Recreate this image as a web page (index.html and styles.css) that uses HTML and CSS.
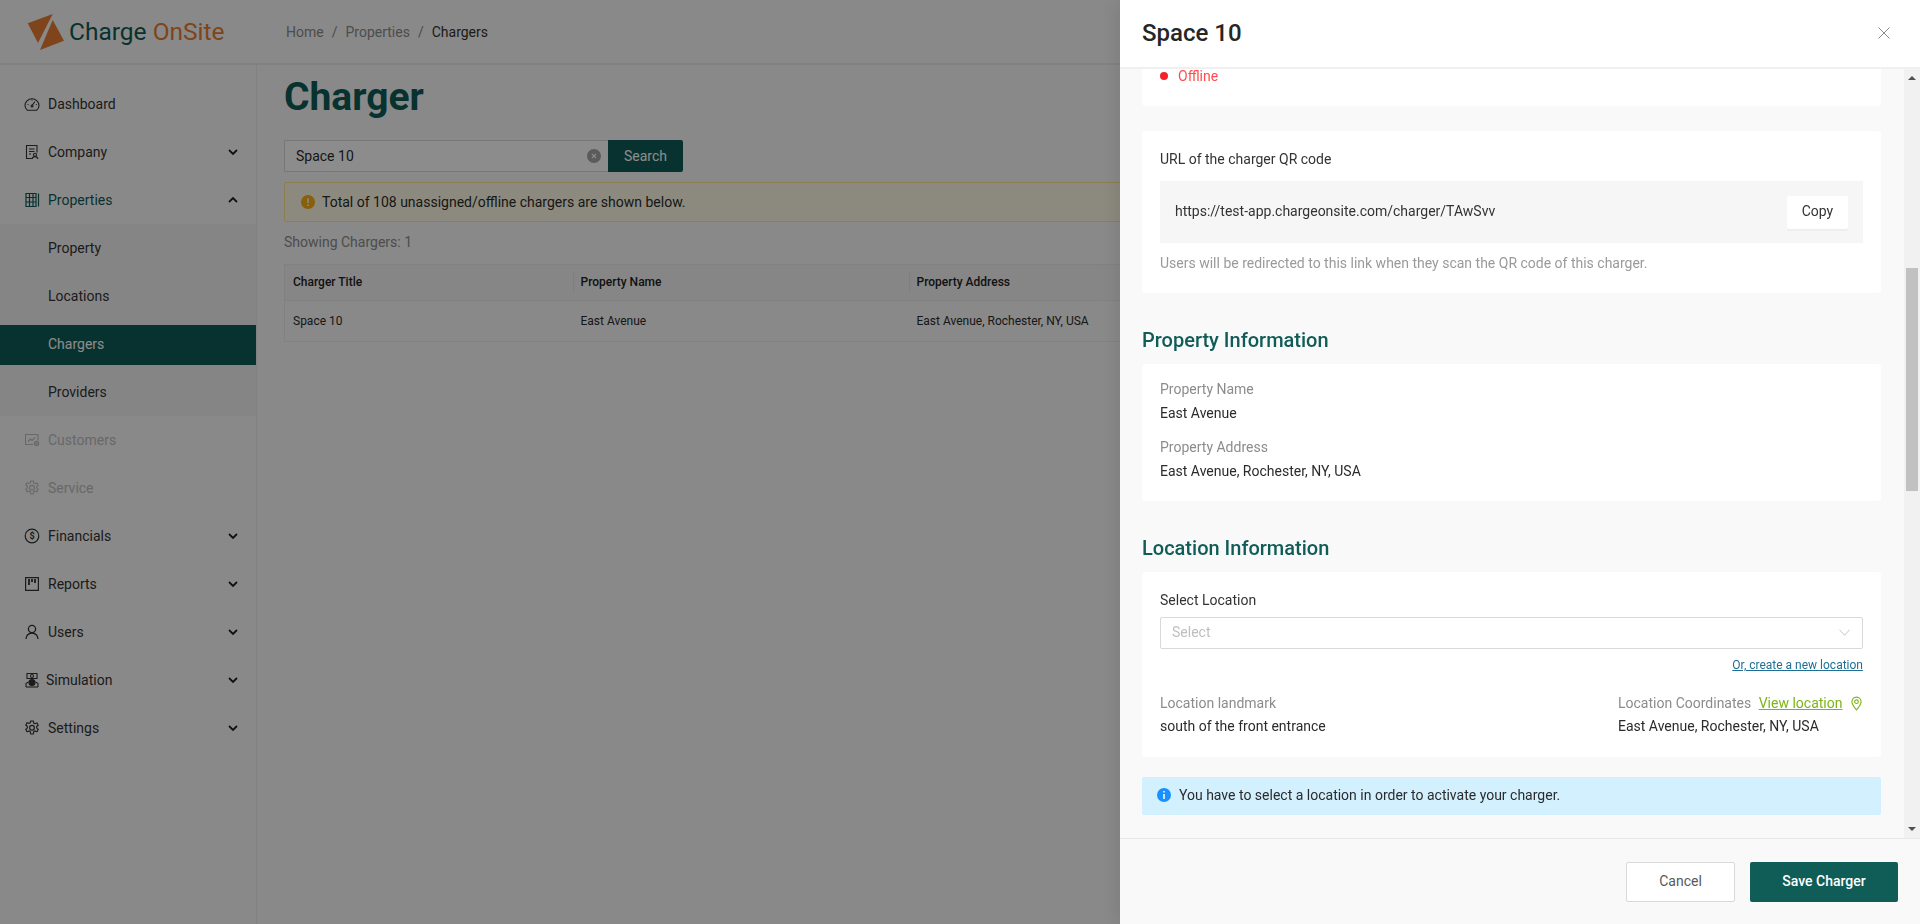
FILE: index.html
```html
<!DOCTYPE html>
<html lang="en">
<head>
    <meta charset="UTF-8">
    <title>Charge OnSite</title>
    <link rel="stylesheet" href="styles.css">
</head>
<body>

<div class="app">
    <!-- Top bar -->
    <header class="topbar">
        <div class="logo">
            <svg width="38" height="38" viewBox="0 0 38 38">
                <path fill="#e87d33" d="M0.700 10.300 L25.700 1 L11 30 Z"/>
                <path fill="#e87d33" d="M25.700 7 L37 27.700 L13 37 Z"/>
            </svg>
            <span class="logo-text">Charge <span class="logo-accent">OnSite</span></span>
        </div>
        <nav class="breadcrumb">
            <span>Home</span><span class="sep">/</span><span>Properties</span><span class="sep">/</span><span class="current">Chargers</span>
        </nav>
    </header>

    <div class="layout">
        <!-- Sidebar -->
        <aside class="sidebar">
            <div class="nav-item">
                <svg class="nav-icon" viewBox="0 0 16 16" fill="none" stroke="currentColor" stroke-width="1.100"><path d="M3.200 14.200 A7 6.600 0 1 1 12.800 14.200 Z"/><path d="M8 9.500 L11 5.500"/><path d="M3.500 8.500h1M11.800 8.500h1M8 3.500v1"/><circle cx="8" cy="10" r="1"/></svg>
                <span>Dashboard</span>
            </div>
            <div class="nav-item">
                <svg class="nav-icon" viewBox="0 0 16 16" fill="none" stroke="currentColor" stroke-width="1.100"><path d="M8 14.500H2.500V1.500h10.500v7"/><path d="M5 5h5.500M5 7.500h5.500M5 10h2"/><circle cx="11" cy="10.800" r="1.600"/><path d="M8.200 15c.2-1.500 1.300-2.400 2.800-2.400s2.600.9 2.800 2.400"/></svg>
                <span>Company</span>
                <svg class="chevron" viewBox="0 0 10 6"><path d="M1 1l4 4 4-4"/></svg>
            </div>
            <div class="nav-item nav-open">
                <svg class="nav-icon" viewBox="0 0 16 16" fill="none" stroke="currentColor" stroke-width="1.200"><path d="M2 1.500h10v13H2zM2 5.500h10M2 10h10M5.500 1.500v13M9 1.500v13M14.500 1.500v13"/></svg>
                <span>Properties</span>
                <svg class="chevron" viewBox="0 0 10 6"><path d="M1 5l4-4 4 4"/></svg>
            </div>
            <div class="submenu">
                <div class="sub-item">Property</div>
                <div class="sub-item">Locations</div>
                <div class="sub-item sub-active">Chargers</div>
                <div class="sub-item">Providers</div>
            </div>
            <div class="nav-item nav-disabled">
                <svg class="nav-icon" viewBox="0 0 16 16" fill="none" stroke="currentColor" stroke-width="1.100"><path d="M9 12.500H1.500v-10h12.500v6"/><path d="M4 9.500l2.500-2.500 1.500 1.500 3-3"/><circle cx="12.500" cy="11.500" r="2.200"/><circle cx="12.500" cy="11.500" r=".7"/></svg>
                <span>Customers</span>
            </div>
            <div class="nav-item nav-disabled">
                <svg class="nav-icon" viewBox="0 0 16 16" fill="none" stroke="currentColor" stroke-width="1.100"><path d="M6.700 1h2.600l.4 2 1.300.7 1.900-.7 1.300 2.300-1.500 1.300v1.500l1.500 1.300-1.300 2.300-1.900-.7-1.300.7-.4 2.300H6.700l-.4-2.300-1.300-.7-1.900.7-1.300-2.300 1.500-1.300V6.300L1.800 5l1.300-2.300 1.900.7 1.300-.7z"/><circle cx="8" cy="7.800" r="2.400"/></svg>
                <span>Service</span>
            </div>
            <div class="nav-item">
                <svg class="nav-icon" viewBox="0 0 16 16" fill="none" stroke="currentColor" stroke-width="1.200"><circle cx="8" cy="8" r="6.800"/><text x="8" y="11" text-anchor="middle" class="dollar">$</text></svg>
                <span>Financials</span>
                <svg class="chevron" viewBox="0 0 10 6"><path d="M1 1l4 4 4-4"/></svg>
            </div>
            <div class="nav-item">
                <svg class="nav-icon" viewBox="0 0 16 16" fill="none" stroke="currentColor" stroke-width="1.200"><path d="M1.600 1.600h12.800v12.800H1.600z"/><path stroke-width="1.800" d="M5 3v6M8 3v3M11 3v4"/></svg>
                <span>Reports</span>
                <svg class="chevron" viewBox="0 0 10 6"><path d="M1 1l4 4 4-4"/></svg>
            </div>
            <div class="nav-item">
                <svg class="nav-icon" viewBox="0 0 16 16" fill="none" stroke="currentColor" stroke-width="1.300"><circle cx="8" cy="5" r="3.600"/><path d="M2 15c0-3.500 2.600-6 6-6s6 2.500 6 6"/></svg>
                <span>Users</span>
                <svg class="chevron" viewBox="0 0 10 6"><path d="M1 1l4 4 4-4"/></svg>
            </div>
            <div class="nav-item nav-tight">
                <svg class="nav-icon" viewBox="0 0 16 16" fill="none" stroke="currentColor" stroke-width="1.100"><path d="M3 1.500h10v5H3zM2 15v-3.500l2.500-1.500M14 15v-3.500L11.500 10"/><circle cx="8" cy="4" r="1.500"/><circle cx="8" cy="10.500" r="3" fill="currentColor"/><path d="M2 15h12"/></svg>
                <span>Simulation</span>
                <svg class="chevron" viewBox="0 0 10 6"><path d="M1 1l4 4 4-4"/></svg>
            </div>
            <div class="nav-item">
                <svg class="nav-icon" viewBox="0 0 16 16" fill="none" stroke="currentColor" stroke-width="1.200"><path d="M6.700 1h2.600l.4 2 1.300.7 1.900-.7 1.300 2.300-1.500 1.300v1.500l1.500 1.300-1.300 2.300-1.900-.7-1.300.7-.4 2.300H6.700l-.4-2.300-1.300-.7-1.900.7-1.300-2.300 1.500-1.300V6.300L1.800 5l1.300-2.300 1.900.7 1.300-.7z"/><circle cx="8" cy="7.800" r="2.400"/></svg>
                <span>Settings</span>
                <svg class="chevron" viewBox="0 0 10 6"><path d="M1 1l4 4 4-4"/></svg>
            </div>
        </aside>

        <!-- Page content -->
        <main class="main">
            <h1 class="page-title">Charger</h1>
            <div class="search">
                <div class="search-input">
                    <span>Space 10</span>
                    <svg class="clear-icon" viewBox="0 0 12 12"><circle cx="6" cy="6" r="6" fill="#a6a6a6"/><path d="M4.200 4.200l3.600 3.600M7.800 4.200l-3.600 3.600" stroke="#fff" stroke-width="1"/></svg>
                </div>
                <button class="search-btn">Search</button>
            </div>
            <div class="warning">
                <svg class="alert-icon" viewBox="0 0 14 14"><circle cx="7" cy="7" r="7" fill="#faad14"/><path d="M7 3.200v4.800M7 9.500v1.400" stroke="#fff" stroke-width="1.500"/></svg>
                <span>Total of 108 unassigned/offline chargers are shown below.</span>
            </div>
            <div class="showing">Showing Chargers: 1</div>
            <table class="table">
                <thead>
                    <tr><th class="col-title"><span>Charger Title</span></th><th class="col-name"><span>Property Name</span></th><th><span>Property Address</span></th></tr>
                </thead>
                <tbody>
                    <tr><td>Space 10</td><td>East Avenue</td><td>East Avenue, Rochester, NY, USA</td></tr>
                </tbody>
            </table>
        </main>
    </div>
</div>

<div class="mask"></div>

<!-- Drawer -->
<section class="drawer">
    <div class="drawer-header">
        <h2 class="drawer-title">Space 10</h2>
        <svg class="close-icon" viewBox="0 0 12 12"><path d="M.5.500l11 11M11.500.500l-11 11"/></svg>
    </div>
    <div class="drawer-scroll">
        <div class="drawer-content">
            <div class="card card-status">
                <span class="status-dot"></span><span class="status-text">Offline</span>
            </div>

            <div class="card card-url">
                <div class="field-label">URL of the charger QR code</div>
                <div class="url-box">
                    <span class="url-text">https://test-app.chargeonsite.com/charger/TAwSvv</span>
                    <button class="copy-btn">Copy</button>
                </div>
                <div class="hint">Users will be redirected to this link when they scan the QR code of this charger.</div>
            </div>

            <h3 class="section-title">Property Information</h3>
            <div class="card card-property">
                <div class="label">Property Name</div>
                <div class="value">East Avenue</div>
                <div class="label label-next">Property Address</div>
                <div class="value">East Avenue, Rochester, NY, USA</div>
            </div>

            <h3 class="section-title">Location Information</h3>
            <div class="card card-location">
                <div class="field-label">Select Location</div>
                <div class="select">
                    <span>Select</span>
                    <svg class="select-arrow" viewBox="0 0 12 7"><path d="M.5.500L6 6.500 11.500.500"/></svg>
                </div>
                <div class="new-location"><a href="#">Or, create a new location</a></div>
                <div class="location-info">
                    <div>
                        <div class="label">Location landmark</div>
                        <div class="value">south of the front entrance</div>
                    </div>
                    <div class="coords">
                        <div class="label">Location Coordinates <a class="view-link" href="#">View location</a>
                            <svg class="pin-icon" viewBox="0 0 12 16" fill="none" stroke="#7cb518" stroke-width="1.200"><path d="M6 15C3 11.500 1 8.800 1 6a5 5 0 0 1 10 0c0 2.800-2 5.500-5 9z"/><circle cx="6" cy="6" r="2"/></svg>
                        </div>
                        <div class="value">East Avenue, Rochester, NY, USA</div>
                    </div>
                </div>
            </div>

            <div class="info">
                <svg class="alert-icon" viewBox="0 0 14 14"><circle cx="7" cy="7" r="7" fill="#1890ff"/><path d="M7 6v5M7 3v1.500" stroke="#fff" stroke-width="1.500"/></svg>
                <span>You have to select a location in order to activate your charger.</span>
            </div>
        </div>
        <div class="scrollbar">
            <span class="arrow-up"></span>
            <span class="thumb"></span>
            <span class="arrow-down"></span>
        </div>
    </div>
    <div class="drawer-footer">
        <button class="btn-cancel">Cancel</button>
        <button class="btn-save">Save Charger</button>
    </div>
</section>

</body>
</html>
```

FILE: styles.css
```css
* {
    box-sizing: border-box;
}
html, body {
    height: 100%;
}
body {
    margin: 0;
    overflow: hidden;
    font-family: Roboto, "Liberation Sans", sans-serif;
    font-size: 14px;
    line-height: 20px;
    color: #2b2b2b;
    background-color: #fafafa;
}
button {
    font-family: inherit;
    font-size: 14px;
    cursor: pointer;
}

/* Top bar */
.topbar {
    display: flex;
    align-items: center;
    height: 65px;
    border-bottom: 2px solid #ececec;
}
.logo {
    display: flex;
    align-items: center;
    width: 286px;
    padding-left: 27px;
    padding-top: 1px;
}
.logo-text {
    margin-left: 4px;
    font-size: 24.500px;
    line-height: 30px;
    color: #105c57;
}
.logo-accent {
    color: #e87d33;
}
.breadcrumb {
    display: flex;
    color: #8c8c8c;
}
.breadcrumb .sep {
    margin: 0 8px;
}
.breadcrumb .current {
    color: #333;
}

/* Sidebar */
.layout {
    display: flex;
    height: 859px;
}
.sidebar {
    width: 257px;
    flex: none;
    padding-top: 15px;
    border-right: 1px solid #ececec;
}
.nav-item {
    display: flex;
    align-items: center;
    height: 48px;
    padding: 0 24px;
    color: #333;
}
.nav-icon {
    width: 16px;
    height: 16px;
    margin-right: 8px;
    flex: none;
}
.nav-tight .nav-icon {
    margin-right: 6px;
}
.chevron {
    width: 10px;
    height: 6px;
    margin-left: auto;
    margin-right: -6px;
    fill: none;
    stroke: #222;
    stroke-width: 1.800;
}
.nav-open {
    color: #105c57;
}
.nav-disabled {
    color: #bdbdbd;
}
.dollar {
    font-family: Roboto, sans-serif;
    font-size: 9px;
    font-weight: 700;
    fill: currentColor;
    stroke: none;
}
.submenu {
    display: flex;
    flex-direction: column;
    gap: 8px;
    padding: 5px 0 3px;
    background-color: #f3f3f3;
}
.sub-item {
    display: flex;
    align-items: center;
    height: 40px;
    padding: 0 0 2px 48px;
    color: #333;
}
.sub-active {
    background-color: #105c57;
    color: #fff;
}

/* Main */
.main {
    flex: 1;
    padding: 8px 28px 0 27px;
}
.page-title {
    margin: 0 0 19px;
    font-size: 39px;
    line-height: 48px;
    font-weight: 700;
    color: #105c57;
}
.search {
    display: flex;
    height: 32px;
}
.search-input {
    display: flex;
    align-items: center;
    justify-content: space-between;
    width: 324px;
    padding: 0 7px 0 11px;
    background-color: #fff;
    border: 1px solid #d9d9d9;
    border-right: none;
    border-radius: 2px 0 0 2px;
}
.clear-icon {
    width: 14px;
    height: 14px;
}
.search-btn {
    width: 75px;
    border: none;
    border-radius: 0 2px 2px 0;
    background-color: #105c57;
    color: #fff;
}
.warning {
    display: flex;
    align-items: center;
    height: 40px;
    margin-top: 10px;
    padding-left: 16px;
    background-color: #fffbe6;
    border: 1px solid #ffe58f;
    border-radius: 2px;
}
.warning .alert-icon {
    margin-right: 7px;
}
.alert-icon {
    width: 14px;
    height: 14px;
    margin-right: 8px;
    flex: none;
}
.showing {
    margin-top: 10px;
    color: #8c8c8c;
}
.table {
    width: 100%;
    margin-top: 12px;
    border-collapse: collapse;
    table-layout: fixed;
    font-size: 12px;
}
.table th {
    height: 36px;
    padding: 0 0 2px;
    text-align: left;
    font-weight: 500;
    color: #222;
    background-color: #f5f5f5;
    border-top: 1px solid #ececec;
    border-bottom: 1px solid #ececec;
}
.table th span {
    display: block;
    padding-left: 7px;
    border-left: 1px solid #e6e6e6;
}
.table th:first-child span {
    padding-left: 8px;
    border-left: none;
}
.table td {
    height: 41px;
    padding: 0 8px;
    background-color: #fafafa;
    border-bottom: 1px solid #ececec;
}
.table th:first-child, .table td:first-child {
    border-left: 1px solid #ececec;
}
.col-title {
    width: 288px;
}
.col-name {
    width: 336px;
}

/* Mask and drawer */
.mask {
    position: fixed;
    inset: 0;
    background-color: rgba(0, 0, 0, .45);
}
.drawer {
    position: fixed;
    top: 0;
    right: 0;
    bottom: 0;
    width: 800px;
    display: flex;
    flex-direction: column;
    background-color: #f9f9f9;
    box-shadow: -6px 0 16px rgba(0, 0, 0, .08);
}
.drawer-header {
    display: flex;
    align-items: center;
    justify-content: space-between;
    flex: none;
    height: 69px;
    padding: 0 30px 2px 22px;
    background-color: #fff;
    border-bottom: 2px solid #f0f0f0;
}
.drawer-title {
    margin: 0;
    font-size: 24px;
    line-height: 32px;
    font-weight: 500;
    color: #262626;
}
.close-icon {
    width: 12px;
    height: 12px;
    fill: none;
    stroke: #8c8c8c;
    stroke-width: 1;
}
.drawer-scroll {
    flex: 1;
    display: flex;
    min-height: 0;
    border-bottom: 1px solid #e8e8e8;
}
.drawer-content {
    flex: 1;
    padding: 0 23px 0 22px;
    overflow: hidden;
}
.card {
    background-color: #fff;
    border-radius: 4px;
    padding: 0 18px;
}
.card-status {
    display: flex;
    align-items: center;
    height: 37px;
    padding-bottom: 23px;
    border-radius: 0 0 4px 4px;
}
.status-dot {
    width: 8px;
    height: 8px;
    margin-right: 10px;
    border-radius: 50%;
    background-color: #f5222d;
}
.status-text {
    color: #ff4d4f;
}
.card-url {
    height: 162px;
    margin-top: 25px;
    padding-top: 18px;
}
.field-label {
    color: #333;
}
.url-box {
    display: flex;
    align-items: center;
    justify-content: space-between;
    height: 62px;
    margin-top: 12px;
    padding: 0 15px;
    background-color: #f6f6f6;
    color: #333;
}
.url-text {
    margin-bottom: 2px;
}
.copy-btn {
    width: 61px;
    height: 33px;
    padding-bottom: 3px;
    border: none;
    border-radius: 2px;
    background-color: #fff;
    color: #333;
    box-shadow: 0 2px 0 rgba(0, 0, 0, .03);
}
.hint {
    margin-top: 10px;
    color: #9a9a9a;
}
.section-title {
    margin: 33px 0 10px;
    font-size: 20px;
    line-height: 28px;
    font-weight: 500;
    color: #105c57;
}
.card-property {
    height: 137px;
    padding-top: 15px;
}
.label {
    color: #8c8c8c;
}
.value {
    margin-top: 4px;
    color: #2b2b2b;
}
.label-next {
    margin-top: 14px;
}
.card-location {
    height: 185px;
    padding-top: 18px;
}
.select {
    display: flex;
    align-items: center;
    justify-content: space-between;
    height: 32px;
    margin-top: 7px;
    padding: 0 12px 2px 11px;
    border: 1px solid #d9d9d9;
    border-radius: 2px;
    color: #bfbfbf;
}
.select-arrow {
    width: 11px;
    height: 7px;
    fill: none;
    stroke: #bfbfbf;
}
.new-location {
    margin-top: 8px;
    text-align: right;
    font-size: 12px;
    line-height: 16px;
}
.new-location a {
    color: #1f6f94;
}
.location-info {
    display: flex;
    justify-content: space-between;
    margin-top: 20px;
}
.location-info .value {
    margin-top: 3px;
}
.coords {
    width: 245px;
}
.view-link {
    margin-left: 4px;
    color: #7cb518;
}
.pin-icon {
    width: 11px;
    height: 15px;
    margin-left: 5px;
    vertical-align: -3px;
}
.info {
    display: flex;
    align-items: center;
    height: 38px;
    margin-top: 20px;
    padding: 0 0 2px 15px;
    background-color: #d3f0ff;
    border-radius: 2px;
}

/* Scrollbar */
.scrollbar {
    position: relative;
    width: 16px;
    flex: none;
    background-color: #f1f1f1;
}
.thumb {
    display: block;
    width: 12px;
    height: 223px;
    margin: 199px 0 0 2px;
    background-color: #c1c1c1;
}
.arrow-up, .arrow-down {
    position: absolute;
    left: 4px;
    border-left: 4px solid transparent;
    border-right: 4px solid transparent;
}
.arrow-up {
    top: 7px;
    border-bottom: 4px solid #505050;
}
.arrow-down {
    bottom: 7px;
    border-top: 4px solid #505050;
}

/* Footer */
.drawer-footer {
    display: flex;
    align-items: center;
    justify-content: flex-end;
    gap: 15px;
    flex: none;
    height: 85px;
    padding: 0 22px 0 0;
}
.btn-cancel, .btn-save {
    height: 40px;
    padding-bottom: 3px;
    border-radius: 2px;
}
.btn-cancel {
    width: 109px;
    background-color: #fff;
    border: 1px solid #d9d9d9;
    color: #595959;
}
.btn-save {
    width: 148px;
    border: none;
    font-weight: 500;
    background-color: #105c57;
    color: #fff;
}
```
